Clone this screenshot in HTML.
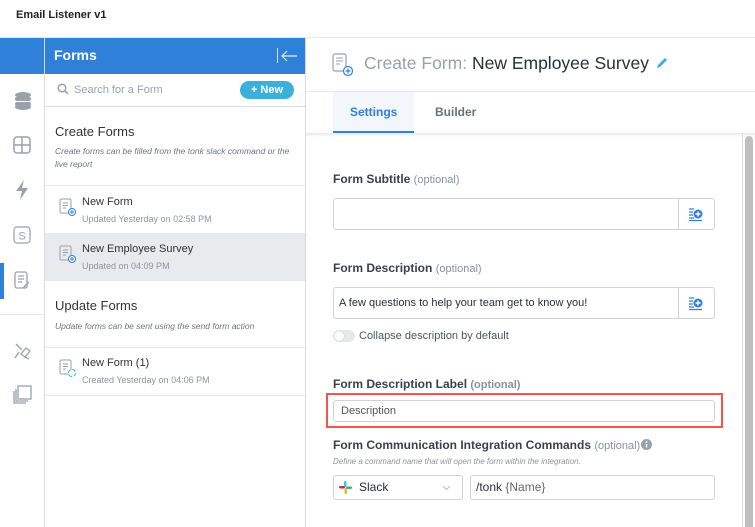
<!DOCTYPE html><html><head><style>
*{box-sizing:border-box;margin:0;padding:0}
body{width:755px;height:527px;overflow:hidden;background:#fff;font-family:"Liberation Sans",sans-serif;position:relative;color:#333}
.a{position:absolute}
.lbl{font-size:12px;font-weight:bold;color:#3c4048}
.opt{font-weight:normal;color:#8a919c;font-size:11px}
.inp{border:1px solid #cfd3d8;border-radius:3px;background:#fff}
.it{font-size:11px;color:#333}
.sub{font-size:9px;color:#8e949c}
</style></head><body>
<div class="a" style="left:16px;top:9px;font-size:11px;font-weight:bold;color:#222">Email Listener v1</div>
<div class="a" style="left:0;top:37px;width:755px;height:1px;background:#e6e8eb"></div>
<div class="a" style="left:0;top:38px;width:45px;height:36px;background:#2e80d9"></div>
<div class="a" style="left:44px;top:38px;width:1px;height:489px;background:#d8dbdf"></div>
<div class="a" style="left:0;top:314px;width:44px;height:1px;background:#e2e4e7"></div>
<div class="a" style="left:0;top:263px;width:4px;height:36px;background:#2e80d9"></div>
<svg class="a" style="left:13px;top:91px" width="20" height="20"><g fill="#9aa1ab"><ellipse cx="10" cy="4" rx="8" ry="3"/><rect x="2" y="6" width="16" height="4" rx="2"/><rect x="2" y="11" width="16" height="4" rx="2"/><ellipse cx="10" cy="16" rx="8" ry="3"/></g></svg>
<svg class="a" style="left:13px;top:136px" width="18" height="18"><rect x="1" y="1" width="16" height="16" rx="3" fill="none" stroke="#9aa1ab" stroke-width="1.5"/><path d="M9 1V17M1 9H17" stroke="#9aa1ab" stroke-width="1.5"/></svg>
<svg class="a" style="left:15px;top:180px" width="14" height="20"><path d="M9 0L1 11H7L5 20L13 8H7Z" fill="#9aa1ab"/></svg>
<svg class="a" style="left:13px;top:226px" width="18" height="18"><rect x="1" y="1" width="16" height="16" rx="3" fill="none" stroke="#9aa1ab" stroke-width="1.2"/><text x="9" y="13.5" font-size="11" text-anchor="middle" fill="#9aa1ab" font-family="Liberation Sans">S</text></svg>
<svg class="a" style="left:13px;top:271px" width="18" height="20"><rect x="2" y="1" width="12" height="16" rx="2" fill="none" stroke="#9aa1ab" stroke-width="1.3"/><path d="M5 5H11M5 8H11M5 11H9M10 17L16 11" stroke="#9aa1ab" stroke-width="1.3"/></svg>
<svg class="a" style="left:13px;top:342px" width="20" height="18"><path d="M3 2L9 8M8 12L13 6L17 9L12 15ZM12 15L16 17M6 10L2 16" stroke="#9aa1ab" stroke-width="1.3" fill="none"/></svg>
<svg class="a" style="left:13px;top:385px" width="20" height="20"><rect x="5" y="1" width="13" height="13" fill="none" stroke="#9aa1ab" stroke-width="1.3"/><path d="M3 4V16H15M1 6V18H13" stroke="#9aa1ab" stroke-width="1.3" fill="none"/></svg>
<div class="a" style="left:45px;top:38px;width:260px;height:36px;background:#2e80d9"></div>
<div class="a" style="left:54px;top:47px;color:#fff;font-size:14px;font-weight:bold">Forms</div>
<div class="a" style="left:277px;top:48px;width:1px;height:15px;background:#cfe0f5"></div>
<svg class="a" style="left:280px;top:49px" width="18" height="14"><path d="M17 7H2M7 2L2 7L7 12" stroke="#e3eefb" stroke-width="1.2" fill="none"/></svg>
<div class="a" style="left:305px;top:38px;width:1px;height:489px;background:#d8dbdf"></div>
<svg class="a" style="left:57px;top:83px" width="12" height="12"><circle cx="5" cy="5" r="3.8" stroke="#9aa1ab" stroke-width="1.5" fill="none"/><path d="M8 8L11 11" stroke="#9aa1ab" stroke-width="1.6"/></svg>
<div class="a" style="left:74px;top:84px;font-size:11px;color:#9aa1ab">Search for a Form</div>
<div class="a" style="left:240px;top:81px;width:54px;height:18px;border-radius:9px;background:#3cb0d9;color:#fff;font-size:11px;font-weight:bold;text-align:center;line-height:18px">+ New</div>
<div class="a" style="left:45px;top:106px;width:260px;height:1px;background:#d8dbdf"></div>
<div class="a" style="left:55px;top:124px;font-size:13px;color:#333">Create Forms</div>
<div class="a" style="left:55px;top:145px;width:240px;font-size:8.5px;font-style:italic;color:#6e747c;line-height:13px">Create forms can be filled from the tonk slack command or the live report</div>
<div class="a" style="left:45px;top:185px;width:260px;height:1px;background:#e6e8eb"></div>
<div class="a" style="left:45px;top:233px;width:260px;height:48px;background:#e8eaee"></div>
<svg class="a" style="left:59px;top:198px" width="18" height="20"><rect x="1" y="1" width="11" height="14" rx="1.5" fill="none" stroke="#9aa1ab"/><path d="M4 5H9M4 7.5H9M4 10H7" stroke="#9aa1ab"/><circle cx="13" cy="14" r="3.5" fill="#fff" stroke="#2e80d9"/><path d="M13 12V16M11 14H15" stroke="#2e80d9"/></svg>
<div class="a it" style="left:82px;top:196px">New Form</div>
<div class="a sub" style="left:82px;top:214px">Updated Yesterday on 02:58 PM</div>
<svg class="a" style="left:59px;top:245px" width="18" height="20"><rect x="1" y="1" width="11" height="14" rx="1.5" fill="none" stroke="#9aa1ab"/><path d="M4 5H9M4 7.5H9M4 10H7" stroke="#9aa1ab"/><circle cx="13" cy="14" r="3.5" fill="#fff" stroke="#2e80d9"/><path d="M13 12V16M11 14H15" stroke="#2e80d9"/></svg>
<div class="a it" style="left:82px;top:243px">New Employee Survey</div>
<div class="a sub" style="left:82px;top:261px">Updated on 04:09 PM</div>
<div class="a" style="left:55px;top:298px;font-size:13px;color:#333">Update Forms</div>
<div class="a" style="left:55px;top:321px;font-size:8.5px;font-style:italic;color:#6e747c">Update forms can be sent using the send form action</div>
<div class="a" style="left:45px;top:347px;width:260px;height:1px;background:#e6e8eb"></div>
<svg class="a" style="left:59px;top:359px" width="18" height="20"><rect x="1" y="1" width="11" height="14" rx="1.5" fill="none" stroke="#9aa1ab"/><path d="M4 5H9M4 7.5H9M4 10H7" stroke="#9aa1ab"/><circle cx="13" cy="14" r="3.5" fill="#fff" stroke="#2ec4a0" stroke-dasharray="4 1.5"/></svg>
<div class="a it" style="left:82px;top:357px">New Form (1)</div>
<div class="a sub" style="left:82px;top:375px">Created Yesterday on 04:06 PM</div>
<div class="a" style="left:45px;top:395px;width:260px;height:1px;background:#e6e8eb"></div>
<svg class="a" style="left:332px;top:53px" width="22" height="24"><rect x="1" y="1" width="13" height="17" rx="2" fill="none" stroke="#9aa1ab" stroke-width="1.2"/><path d="M4 5H11M4 8H11M4 11H8" stroke="#9aa1ab"/><circle cx="16" cy="18" r="4.5" fill="#fff" stroke="#2e80d9" stroke-width="1.2"/><path d="M16 15.5V20.5M13.5 18H18.5" stroke="#2e80d9" stroke-width="1.2"/></svg>
<div class="a" style="left:364px;top:53px;font-size:17.5px;color:#9aa1ab;white-space:nowrap">Create Form: <span style="color:#2b2f36">New Employee Survey</span></div>
<svg class="a" style="left:655px;top:56px" width="14" height="14"><path d="M2 12L3 9L10 2L12 4L5 11Z" fill="#3cb0d9"/></svg>
<div class="a" style="left:306px;top:91px;width:449px;height:1px;background:#e6e8eb"></div>
<div class="a" style="left:333px;top:92px;width:81px;height:41px;background:#f3f7fc;border-bottom:2px solid #2e80d9"></div>
<div class="a" style="left:350px;top:105px;font-size:12px;font-weight:bold;color:#2e80d9">Settings</div>
<div class="a" style="left:435px;top:105px;font-size:12px;font-weight:bold;color:#6b7079">Builder</div>
<div class="a" style="left:306px;top:133px;width:449px;height:4px;background:linear-gradient(#e6e8eb,#fff)"></div>
<div class="a" style="left:742px;top:133px;width:1px;height:394px;background:#d8dbdf"></div>
<div class="a" style="left:745px;top:136px;width:8px;height:391px;background:#c0c0c0;border-radius:4px 4px 0 0"></div>
<div class="a lbl" style="left:333px;top:172px">Form Subtitle <span class="opt">(optional)</span></div>
<div class="a inp" style="left:333px;top:198px;width:382px;height:32px"></div>
<div class="a" style="left:678px;top:199px;width:1px;height:30px;background:#cfd3d8"></div>
<svg class="a" style="left:688px;top:206px" width="16" height="16"><path d="M1 3H6M1 6H5M1 9H5M1 12H6M1 14.5H14" stroke="#2e80d9" stroke-width="1.2"/><circle cx="10" cy="8" r="4.5" fill="#2e80d9"/><path d="M10 5.5V10.5M7.5 8H12.5" stroke="#fff" stroke-width="1.4"/></svg>
<div class="a lbl" style="left:333px;top:261px">Form Description <span class="opt">(optional)</span></div>
<div class="a inp" style="left:333px;top:287px;width:382px;height:32px"></div>
<div class="a" style="left:339px;top:297px;font-size:11px;color:#2b2f36">A few questions to help your team get to know you!</div>
<div class="a" style="left:678px;top:288px;width:1px;height:30px;background:#cfd3d8"></div>
<svg class="a" style="left:688px;top:295px" width="16" height="16"><path d="M1 3H6M1 6H5M1 9H5M1 12H6M1 14.5H14" stroke="#2e80d9" stroke-width="1.2"/><circle cx="10" cy="8" r="4.5" fill="#2e80d9"/><path d="M10 5.5V10.5M7.5 8H12.5" stroke="#fff" stroke-width="1.4"/></svg>
<div class="a" style="left:333px;top:330px;width:22px;height:12px;border-radius:6px;background:#e6e8eb"></div>
<div class="a" style="left:334px;top:331px;width:10px;height:10px;border-radius:5px;background:#fff;box-shadow:0 0 1px #999"></div>
<div class="a" style="left:359px;top:330px;font-size:11px;color:#50555c">Collapse description by default</div>
<div class="a lbl" style="left:333px;top:377px">Form Description Label <span class="opt" style="font-weight:bold">(optional)</span></div>
<div class="a" style="left:326px;top:393px;width:397px;height:35px;border:2px solid #f0574a"></div>
<div class="a inp" style="left:333px;top:400px;width:382px;height:22px"></div>
<div class="a" style="left:341px;top:405px;font-size:11px;color:#555">Description</div>
<div class="a lbl" style="left:333px;top:438px">Form Communication Integration Commands <span class="opt">(optional)</span></div>
<svg class="a" style="left:641px;top:439px" width="11" height="11"><circle cx="5.5" cy="5.5" r="5.5" fill="#9aa1ab"/><path d="M5.5 5V8.5" stroke="#fff" stroke-width="1.4"/><circle cx="5.5" cy="3" r="0.9" fill="#fff"/></svg>
<div class="a" style="left:333px;top:457px;font-size:8px;font-style:italic;color:#8e949c">Define a command name that will open the form within the integration.</div>
<div class="a inp" style="left:333px;top:475px;width:130px;height:25px"></div>
<svg class="a" style="left:339px;top:481px" width="13" height="13"><rect x="5" y="0" width="2.5" height="6" rx="1.2" fill="#36c5f0"/><rect x="0" y="5" width="6" height="2.5" rx="1.2" fill="#e01e5a"/><rect x="5.5" y="7" width="2.5" height="6" rx="1.2" fill="#ecb22e"/><rect x="7" y="5.5" width="6" height="2.5" rx="1.2" fill="#2eb67d"/></svg>
<div class="a" style="left:359px;top:480px;font-size:12px;color:#2b2f36">Slack</div>
<svg class="a" style="left:442px;top:485px" width="9" height="6"><path d="M1 1L4.5 4.5L8 1" stroke="#b5bac1" fill="none"/></svg>
<div class="a inp" style="left:470px;top:475px;width:245px;height:25px"></div>
<div class="a" style="left:476px;top:480px;font-size:12px;color:#2b2f36">/tonk <span style="color:#666">{Name}</span></div>
</body></html>
